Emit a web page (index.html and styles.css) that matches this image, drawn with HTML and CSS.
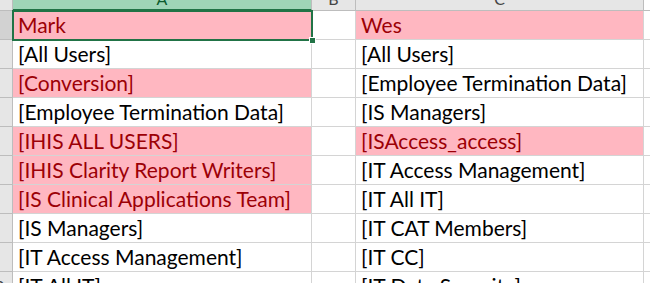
FILE: index.html
```html
<!DOCTYPE html>
<html lang="en">
<head>
    <meta charset="UTF-8">
    <title>Group Comparison</title>
    <link rel="stylesheet" href="styles.css">
</head>
<body>

    <div class="sheet">
        <!-- Column headers -->
        <div class="head corner"></div>
        <div class="head col-a active"><span>A</span></div>
        <div class="head"><span>B</span></div>
        <div class="head"><span>C</span></div>
        <div class="head rest"></div>

        <div class="rowhead current"><span>1</span></div>
        <div class="cell bad">Mark</div>
        <div class="cell"></div>
        <div class="cell bad">Wes</div>
        <div class="cell rest"></div>

        <div class="rowhead"><span>2</span></div>
        <div class="cell">[All Users]</div>
        <div class="cell"></div>
        <div class="cell">[All Users]</div>
        <div class="cell rest"></div>

        <div class="rowhead"><span>3</span></div>
        <div class="cell bad">[Conversion]</div>
        <div class="cell"></div>
        <div class="cell">[Employee Termination Data]</div>
        <div class="cell rest"></div>

        <div class="rowhead"><span>4</span></div>
        <div class="cell">[Employee Termination Data]</div>
        <div class="cell"></div>
        <div class="cell">[IS Managers]</div>
        <div class="cell rest"></div>

        <div class="rowhead"><span>5</span></div>
        <div class="cell bad">[IHIS ALL USERS]</div>
        <div class="cell"></div>
        <div class="cell bad">[ISAccess_access]</div>
        <div class="cell rest"></div>

        <div class="rowhead"><span>6</span></div>
        <div class="cell bad">[IHIS Clarity Report Writers]</div>
        <div class="cell"></div>
        <div class="cell">[IT Access Management]</div>
        <div class="cell rest"></div>

        <div class="rowhead"><span>7</span></div>
        <div class="cell bad">[IS Clinical Applications Team]</div>
        <div class="cell"></div>
        <div class="cell">[IT All IT]</div>
        <div class="cell rest"></div>

        <div class="rowhead"><span>8</span></div>
        <div class="cell">[IS Managers]</div>
        <div class="cell"></div>
        <div class="cell">[IT CAT Members]</div>
        <div class="cell rest"></div>

        <div class="rowhead"><span>9</span></div>
        <div class="cell">[IT Access Management]</div>
        <div class="cell"></div>
        <div class="cell">[IT CC]</div>
        <div class="cell rest"></div>

        <div class="rowhead"><span>10</span></div>
        <div class="cell">[IT All IT]</div>
        <div class="cell"></div>
        <div class="cell">[IT Data Security]</div>
        <div class="cell rest"></div>

        <!-- Active cell outline with fill handle -->
        <div class="selection"><div class="handle"></div></div>
    </div>

</body>
</html>
```

FILE: styles.css
```css
* {
    margin: 0;
    padding: 0;
    box-sizing: border-box;
}

body {
    background: #ffffff;
    font-family: Lato, "Open Sans", sans-serif;
    overflow: hidden;
}

/* Grid of cells */
.sheet {
    position: relative;
    display: grid;
    grid-template-columns: 13px 299px 44px 288px 1fr;
    grid-auto-rows: 29px;
    grid-template-rows: 11px;
}

/* Column headers */
.head {
    background: #e6e6e6;
    border-right: 1px solid #bdbdbd;
    border-bottom: 1px solid #bdbdbd;
    color: #444444;
    font-size: 16px;
    text-align: center;
    overflow: hidden;
}

.head span {
    display: block;
    line-height: 18px;
    margin-top: -10px;
}

.head.active {
    background: #9fd5b7;
    color: #0e5c2f;
    border-bottom: 2px solid #217346;
}

.head.rest {
    background: #ffffff;
    border-right: none;
}

/* Row headers */
.rowhead {
    background: #e6e6e6;
    border-right: 1px solid #bdbdbd;
    border-bottom: 1px solid #bdbdbd;
    color: #444444;
    font-size: 16px;
    line-height: 28px;
    display: flex;
    justify-content: flex-end;
    overflow: hidden;
}

.rowhead span {
    flex: 0 0 34px;
    text-align: center;
}

.rowhead.current {
    background: #d2d2d2;
}

/* Data cells */
.cell {
    border-right: 1px solid #d4d4d4;
    border-bottom: 1px solid #d4d4d4;
    color: #000000;
    font-size: 21px;
    line-height: 28px;
    padding-left: 5px;
    white-space: nowrap;
    overflow: hidden;
}

.cell.bad {
    background: #ffb7c1;
    color: #9c0006;
}

.cell.rest {
    border-right: none;
}

/* Active cell */
.selection {
    position: absolute;
    left: 12px;
    top: 10px;
    width: 301px;
    height: 31px;
    border: 2px solid #217346;
}

.handle {
    position: absolute;
    right: -5px;
    bottom: -5px;
    width: 7px;
    height: 7px;
    background: #217346;
    border: 1px solid #ffffff;
}
```
